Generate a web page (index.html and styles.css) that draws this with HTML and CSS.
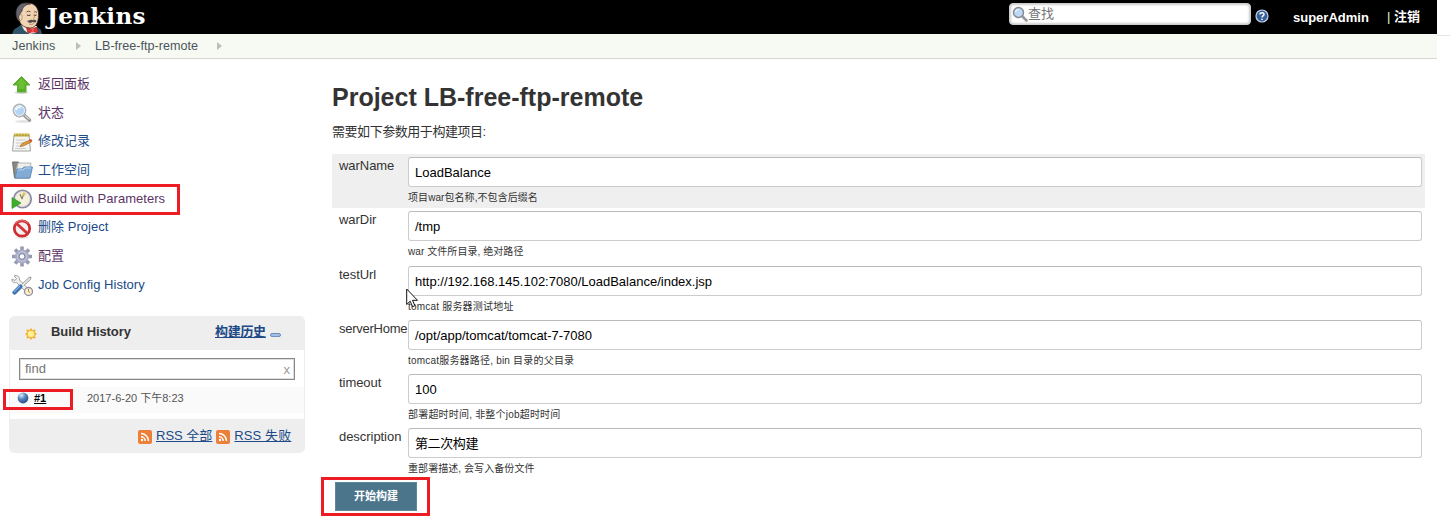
FILE: index.html
```html
<!DOCTYPE html>
<html lang="zh-CN">
<head>
<meta charset="utf-8">
<title>Project LB-free-ftp-remote [Jenkins]</title>
<link rel="stylesheet" href="styles.css">
</head>
<body>
<div class="frame">
<div class="page">
  <header class="header">
    <svg class="butler" width="32" height="34" viewBox="0 0 32 34">
      <path d="M1 34 3 29.500 10 25 26 27 30 30 31 34z" fill="#2f5468"/>
      <path d="M10 24 13 30 18 34 25 33 26 26z" fill="#f3eee4"/>
      <path d="M7 12C8 6 12 3 17 3c6 0 10 4 10.500 10 .5 7-1.500 14.500-8 15-5 .3-10-3-11-7-2.500-1-3-5-1.500-9z" fill="#f0d4b3" stroke="#3b2a22" stroke-width=".8"/>
      <path d="M5.500 17C3.500 9 8 3 14 3c2 0 4 .2 5.500 1-5 .3-8 3-8.500 7l-1.500 2-1.500 3.500 1 3.500c-2 0-3-1-3.500-3z" fill="#66646d" stroke="#302d32" stroke-width=".7"/>
      <path d="M8.500 15c2-1.500 3 .5 2.500 2.500s-.5 3-1.500 3c-1.500 0-2-4-1-5.500z" fill="#f3dabd" stroke="#76563e" stroke-width=".5"/>
      <path d="M15.500 12q2-1.500 4-.3M23 12q1.500-.8 3 .5" fill="none" stroke="#5d4536" stroke-width=".9"/>
      <path d="M16 15q1.500 1 3.500 0M23 15q1 .8 2.500 0" fill="none" stroke="#33251f" stroke-width="1"/>
      <path d="M22.500 14.500q2.500 3-.5 4.500" fill="none" stroke="#bd9168" stroke-width=".9"/>
      <path d="M16 20.500c2 1 3-1.500 5.500-.3 1.500-.8 3.500-.2 4 .8-1 2-3 1.600-4 1-2 1.500-4.500 1-5.500-1.500z" fill="#4f4a4a"/>
      <path d="M18 24q3 1.200 5-.5" fill="none" stroke="#b17b5e" stroke-width=".8"/>
      <path d="M15.500 27.500 21 29l5-2 1.500 6-6-1.500-4.500 2z" fill="#dd3434" stroke="#7c191c" stroke-width=".6"/>
      <path d="M20.500 28.500h2.500v4h-2.500z" fill="#f35350"/>
    </svg>
    <span class="wordmark">Jenkins</span>
    <div class="search">
      <svg width="16" height="16" viewBox="0 0 16 16"><path d="m10 10 4.500 4.500" stroke="#999" stroke-width="2.600" stroke-linecap="round"/><circle cx="6.500" cy="6.500" r="5" fill="#bdd9f3" stroke="#858d99" stroke-width="1.500"/><path d="M3.500 6q.5-2.500 3-2.500" fill="none" stroke="#fff"/></svg>
      <span>查找</span>
    </div>
    <svg class="help" width="14" height="14" viewBox="0 0 14 14"><circle cx="7" cy="7" r="6" fill="#355f9d" stroke="#c5d3e7" stroke-width="1.200"/><path d="M4.800 5.500C5 3.300 9 3.300 9 5.400 9 7 7 6.900 7 8.600" fill="none" stroke="#fff" stroke-width="1.500"/><path d="M6.200 9.700h1.600v1.400H6.200z" fill="#fff"/></svg>
    <b class="user">superAdmin</b>
    <span class="bar">|</span>
    <b class="logout">注销</b>
  </header>
  <nav class="crumbs">
    <span class="crumb-root">Jenkins</span><i class="arrow"></i>
    <span class="crumb-job">LB-free-ftp-remote</span><i class="arrow"></i>
  </nav>
  <div class="body">
    <aside class="side">
      <ul class="tasks">
        <li class="visited"><svg width="24" height="24" viewBox="0 0 24 24"><ellipse cx="12.500" cy="20.500" rx="7" ry="1.500" fill="#d5d5d5"/><path d="m12.500 4.500 8.500 8.500h-4v7H8.500v-7H4z" fill="#58ad25" stroke="#5fae36"/><path d="m12.500 6 5.500 6h-2.500v5h-6v-5H7z" fill="#79cc40" opacity=".6"/></svg><span>返回面板</span></li>
        <li class="visited"><svg width="24" height="24" viewBox="0 0 24 24"><ellipse cx="14" cy="20.500" rx="8" ry="1.500" fill="#e4e4e4"/><path d="m15.500 14.500 5 4.500" stroke="#979997" stroke-width="3.600" stroke-linecap="round"/><path d="m16 14.500 4.500 4" stroke="#d8d8d5" stroke-width="1.200"/><circle cx="10.500" cy="9.500" r="6" fill="#b2d4f5" stroke="#b0b3b8" stroke-width="1.800"/><circle cx="10.500" cy="9.500" r="5" fill="none" stroke="#edf5fc"/><path d="M7 9q1-3.500 5-3" fill="none" stroke="#fff" stroke-width="1.600"/></svg><span>状态</span></li>
        <li><svg width="24" height="24" viewBox="0 0 24 24"><path d="M5 5h15l1.500 16H3.500z" fill="#f4f4f2" stroke="#a2a49f"/><path d="M5 3.500h15.500v3H5z" fill="#bea63e"/><path d="M6.500 3v2m3-2v2m3-2v2m3-2v2m3-2v2" stroke="#e7d68b"/><path d="M7 10h10M7 13h7M7 16h4M6 18.500h11" stroke="#ccceca"/><path d="m11 16.500 2-3 8-3.500 1.500 2-8.500 4z" fill="#e49c38" stroke="#9a6628" stroke-width=".7"/><path d="m20 10 2-1 1.500 2-2 1z" fill="#d5483b"/></svg><span>修改记录</span></li>
        <li><svg width="24" height="24" viewBox="0 0 24 24"><path d="M3.500 4h6l1 2h10v14h-15z" fill="#858883" stroke="#70736f"/><path d="M9 5h13l-1 9H7z" fill="#edeeec" stroke="#b6b8b5"/><path d="M8 11h5l2-2h8.500L21 20H6z" fill="#82abd6" stroke="#6490bf"/><path d="M9 12h5l2-2h6" fill="none" stroke="#b7d4ef"/></svg><span>工作空间</span></li>
        <li class="visited"><svg width="24" height="24" viewBox="0 0 24 24"><circle cx="13.500" cy="12" r="8.700" fill="#f3f0dc" stroke="#8f8b9f" stroke-width="1.800"/><circle cx="13.500" cy="12" r="7.300" fill="none" stroke="#dedae4"/><path d="m13 12-2-5M13 12l2-6" stroke="#8c855f" stroke-width="1.200"/><circle cx="15" cy="7" r="1.500" fill="#e5bd4f"/><path d="m3 10.500 9 5.500-9 5.500z" fill="#3dae2c" stroke="#2b951f" stroke-width=".7"/></svg><span>Build with Parameters</span></li>
        <li><svg width="24" height="24" viewBox="0 0 24 24"><ellipse cx="13" cy="21.500" rx="7" ry="1.200" fill="#e5e5e5"/><circle cx="13" cy="12.500" r="7.700" fill="#f4eeee" stroke="#cd2c30" stroke-width="2.700"/><path d="m8 8 10 9" stroke="#d53436" stroke-width="2.900"/><path d="M6 8.500c3-5 10-5 13-1" fill="none" stroke="#ee8581" stroke-width=".8"/></svg><span>删除 Project</span></li>
        <li class="visited"><svg width="24" height="24" viewBox="0 0 24 24"><g stroke="#9699b2" stroke-width="3.600"><path d="M13 2.500v20M3 12.500h20M6 5.500l14 14M6 19.500l14-14"/></g><circle cx="13" cy="12.500" r="7" fill="#a9adc7"/><circle cx="13" cy="12.500" r="4.700" fill="none" stroke="#c5c9dd"/><circle cx="13" cy="12.500" r="2.800" fill="#fff" stroke="#7b809f"/></svg><span>配置</span></li>
        <li><svg width="24" height="24" viewBox="0 0 24 24"><path d="M5 3c3-1.500 6 .5 5.500 4l8 8-3 2.500-8-8C5 10.500 2.500 9 3 6l3 1.500 1.500-2z" fill="#eeeeec" stroke="#969996" stroke-width=".9"/><path d="m13 11 7-6.500 2-.5-.5 2.500-6.500 6" fill="#e3e5e5" stroke="#888" stroke-width=".8"/><path d="m5.500 19.500 6-6" stroke="#3e73b1" stroke-width="4.200" stroke-linecap="round"/><path d="m5 19 6-6" stroke="#82aedb" stroke-width="1.200"/><circle cx="19.500" cy="18.500" r="4" fill="#f7f1d3" stroke="#948da0" stroke-width="1.300"/><path d="M19.500 16v2.500l1.500 1" fill="none" stroke="#b18537"/></svg><span>Job Config History</span></li>
      </ul>
      <section class="history">
        <div class="hist-head">
          <svg width="16" height="16" viewBox="0 0 16 16"><path d="m8 2 1.500 2 3-.5-.5 3L14 8l-2 1.500.5 3-3-.5L8 14l-1.500-2-3 .5.500-3L2 8l2-1.500-.5-3 3 .5z" fill="#f4a72f"/><circle cx="8" cy="8" r="3.800" fill="#fff193" stroke="#f4b83d"/></svg>
          <b class="hist-title">Build History</b>
          <b class="trend">构建历史</b>
          <i class="collapse"></i>
        </div>
        <div class="find"><span>find</span><span class="clear">x</span></div>
        <div class="build">
          <svg width="12" height="12" viewBox="0 0 12 12"><defs><radialGradient id="ball" cx=".35" cy=".25" r=".8"><stop stop-color="#d9eafa"/><stop offset=".5" stop-color="#517fb7"/><stop offset="1" stop-color="#264d85"/></radialGradient></defs><circle cx="6" cy="6" r="5.400" fill="url(#ball)"/></svg>
          <b class="num">#1</b><span class="date">2017-6-20 下午8:23</span>
        </div>
        <div class="rss">
          <svg width="14" height="14" viewBox="0 0 14 14"><rect width="14" height="14" rx="2" fill="#ed8039"/><g fill="none" stroke="#fff" stroke-width="1.500"><path d="M3 6.800A4.200 4.200 0 0 1 7.200 11M3 3.500A7.500 7.500 0 0 1 10.500 11"/></g><circle cx="4" cy="10" r="1.200" fill="#fff"/></svg><u class="rss-all">RSS 全部</u>
          <svg width="14" height="14" viewBox="0 0 14 14"><rect width="14" height="14" rx="2" fill="#ed8039"/><g fill="none" stroke="#fff" stroke-width="1.500"><path d="M3 6.800A4.200 4.200 0 0 1 7.200 11M3 3.500A7.500 7.500 0 0 1 10.500 11"/></g><circle cx="4" cy="10" r="1.200" fill="#fff"/></svg><u class="rss-failed">RSS 失败</u>
        </div>
      </section>
    </aside>
    <main class="main">
      <h1>Project LB-free-ftp-remote</h1>
      <p class="intro">需要如下参数用于构建项目:</p>
      <div class="form">
        <div class="row shaded"><label>warName</label><div class="field"><div class="input">LoadBalance</div><small>项目war包名称,不包含后缀名</small></div></div>
        <div class="row"><label>warDir</label><div class="field"><div class="input">/tmp</div><small>war 文件所目录, 绝对路径</small></div></div>
        <div class="row"><label>testUrl</label><div class="field"><div class="input">http://192.168.145.102:7080/LoadBalance/index.jsp</div><small class="loose">tomcat 服务器测试地址</small></div></div>
        <div class="row"><label class="tight">serverHome</label><div class="field"><div class="input">/opt/app/tomcat/tomcat-7-7080</div><small class="loose">tomcat服务器路径, bin 目录的父目录</small></div></div>
        <div class="row"><label>timeout</label><div class="field"><div class="input">100</div><small class="loose">部署超时时间, 非整个job超时时间</small></div></div>
        <div class="row"><label>description</label><div class="field"><div class="input tight">第二次构建</div><small>重部署描述, 会写入备份文件</small></div></div>
      </div>
      <div class="submit">开始构建</div>
    </main>
  </div>
</div>
<div class="gutter"></div>
</div>
<div class="mark mark-task"></div>
<div class="mark mark-build"></div>
<div class="mark mark-submit"></div>
<svg class="cursor" width="13" height="20" viewBox="0 0 13 20"><path d="M.7 1v15.500l3.500-3.300 2.400 5.500 2.300-1-2.400-5.400h5z" fill="#fff" stroke="#111"/></svg>
</body>
</html>
```
FILE: styles.css
```css
* { box-sizing: border-box; }
body {
  margin: 0;
  height: 519px;
  overflow: hidden;
  background: #fff;
  color: #333;
  font: 13px/18px "Liberation Sans", "Noto Sans CJK SC", sans-serif;
  white-space: nowrap;
}
svg { display: block; flex: none; }
.frame { display: flex; height: 519px; }
.page { width: 1437px; }
.gutter { width: 13px; height: 36px; border-bottom: 1px solid #e5e5e5; }

.header { display: flex; height: 34px; background: #000; color: #fff; padding-left: 11px; }
.wordmark { width: 966px; padding-left: 5px; font: bold 23px/31px "DejaVu Serif", serif; letter-spacing: .3px; }
.butler { margin-right: -1px; }
.search {
  display: flex; align-items: center; gap: 1px;
  width: 242px; height: 22px; margin: 3px 0 0 1px; padding-left: 2px;
  background: #fff; border: 1px solid #ccc; border-radius: 4px;
  box-shadow: inset 0 0 3px #999; color: #757575;
}
.search span { margin-left: -1px; }
.help { margin: 9px 0 0 4px; }
.user { margin: 9px 0 0 24px; width: 94px; }
.bar { margin-top: 8px; width: 7px; color: #dfd; }
.logout { margin-top: 8px; }

.crumbs {
  display: flex; align-items: center; height: 25px; padding-left: 12px;
  background: #f6faf2; border-bottom: 1px solid #d3d7cf; font-size: 12.6px; color: #4d545d;
}
.crumb-root { width: 64px; letter-spacing: .1px; }
.crumb-job { width: 122px; margin-left: 14px; }
.arrow { border: 4px solid transparent; border-left: 5px solid #bcbfb9; border-right: 0; }

.body { display: flex; }
.side { width: 332px; padding: 11px 0 0 9px; }
.tasks { list-style: none; margin: 0; padding: 0; height: 246px; color: #204a87; }
.tasks li { display: flex; align-items: center; gap: 5px; height: 28.7px; letter-spacing: .03px; }
.tasks span { margin-top: -1px; }
.tasks .visited { color: #5c3566; }

.history { width: 296px; height: 137px; border: 1px solid #eee; border-radius: 5px; overflow: hidden; }
.hist-head { display: flex; align-items: center; height: 33px; padding-left: 13px; background: #eee; }
.hist-title { margin: -3px 0 0 12px; width: 164px; letter-spacing: -.08px; }
.trend { color: #204a87; text-decoration: underline; margin-top: -3px; letter-spacing: -.3px; }
.collapse { width: 11px; height: 4px; margin: 2px 0 0 4px; background: #a0c0e6; border: 1px solid #6c8fbb; border-radius: 2px; }
.find {
  display: flex; justify-content: space-between; width: 276px; height: 22px; margin: 8px 0 7px 9px;
  padding: 1px 4px 1px 5px; border: 1px solid #888; box-shadow: inset 0 0 0 1px #ddd; color: #757575;
}
.clear { color: #999; padding-top: 1px; }
.build { display: flex; align-items: center; height: 26px; padding: 0 0 4px 7px; background: #fafafa; font-size: 11px; }
.num { color: #000; text-decoration: underline; margin-left: 5px; width: 53px; }
.date { color: #555; }
.rss { display: flex; align-items: center; height: 34px; margin-top: 6px; padding-left: 128px; background: #eee; color: #204a87; }
.rss svg { margin: 2px 4px 0 0; }
.rss-all { margin-right: 4px; }
.rss-failed { letter-spacing: .1px; }

.main { width: 1093px; }
h1 { margin: 22px 0 0; font-size: 25px; line-height: 32px; }
.intro { margin: 10px 0 13px; letter-spacing: -.45px; }
.row { display: flex; height: 54.3px; padding: 3px 3px 0 7px; }
.shaded { background: #efefef; }
label { width: 69px; letter-spacing: -.05px; }
label.tight { letter-spacing: -.25px; }
.field { width: 1014px; }
.input { height: 30px; padding: 0 6px; border: 1px solid #ccc; border-top-color: #bbb; border-radius: 3px; background: #fff; color: #000; line-height: 29px; }
.input.tight { letter-spacing: -.4px; }
small { display: block; font-size: 10px; line-height: 14px; margin-top: 4px; letter-spacing: .07px; }
.loose { letter-spacing: .2px; }
.submit { width: 82px; height: 29px; margin: 2px 0 0 3px; background: #4b758b; border: 1px solid #5c8a9f; color: #fff; font-size: 11px; font-weight: bold; line-height: 27px; text-align: center; }

.mark { position: absolute; border: 3px solid #ed1c24; }
.mark-task { left: 0; top: 184px; width: 180px; height: 31px; }
.mark-build { left: 3px; top: 389px; width: 70px; height: 21px; }
.mark-submit { left: 321px; top: 477px; width: 109px; height: 39px; }
.cursor { position: absolute; left: 406px; top: 288px; }
```
